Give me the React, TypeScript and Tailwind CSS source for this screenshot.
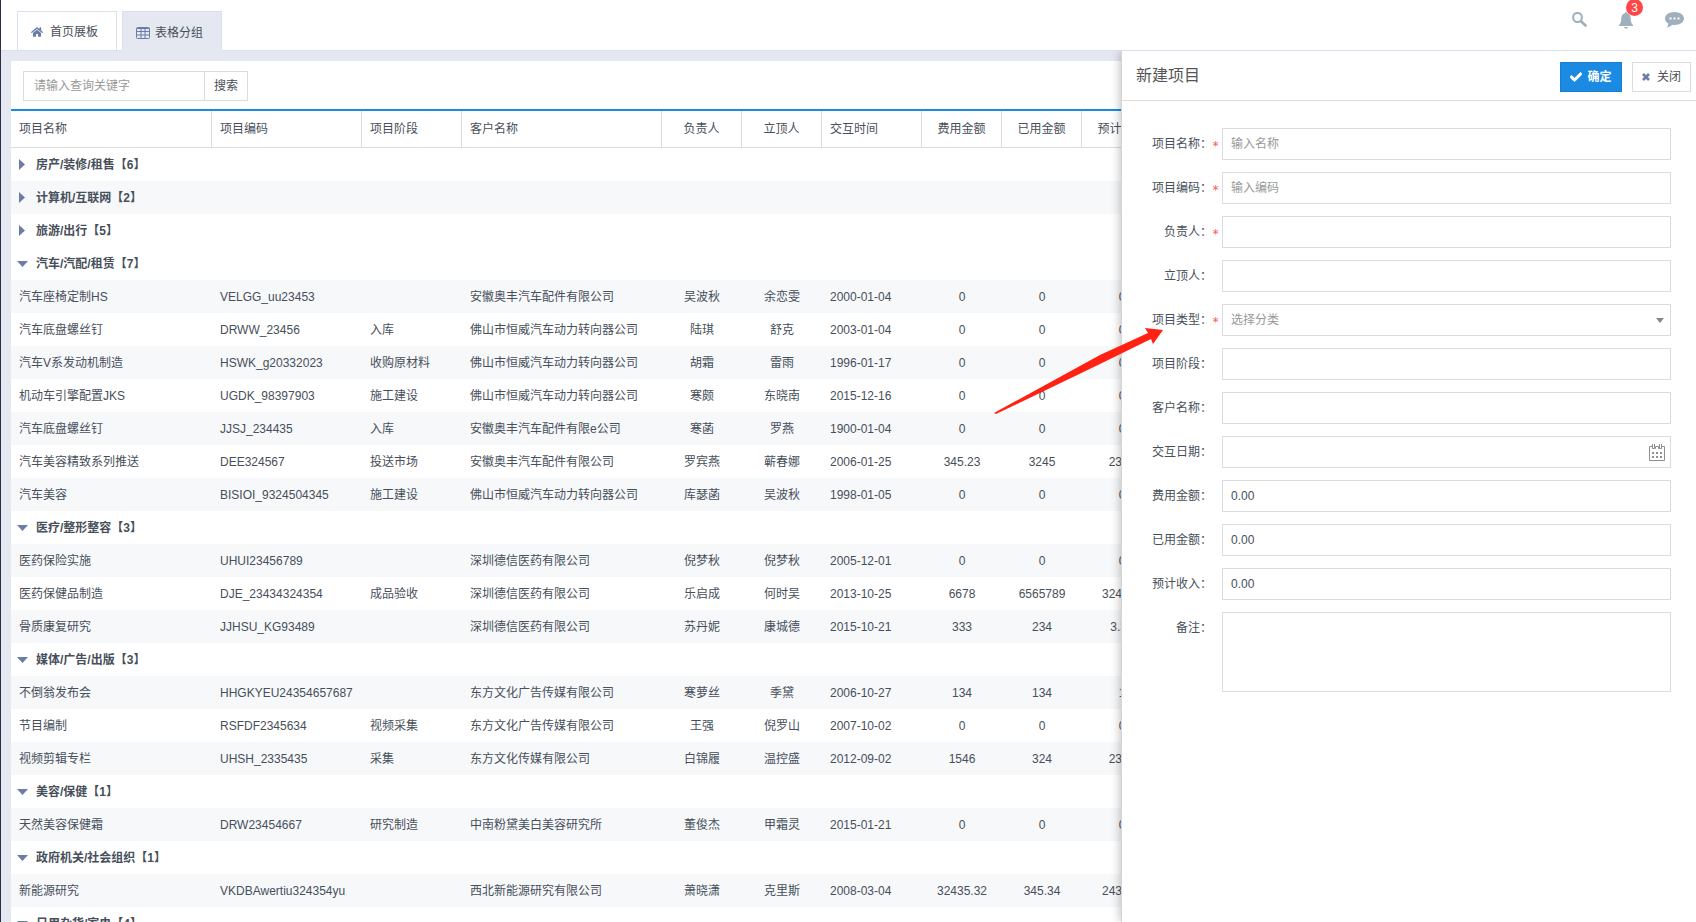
import { FaCheck, FaHome } from 'react-icons/fa';

type Align = 'left' | 'center';

const columns: { title: string; align: Align }[] = [
    { title: '项目名称', align: 'left' },
    { title: '项目编码', align: 'left' },
    { title: '项目阶段', align: 'left' },
    { title: '客户名称', align: 'left' },
    { title: '负责人', align: 'center' },
    { title: '立顶人', align: 'center' },
    { title: '交互时间', align: 'left' },
    { title: '费用金额', align: 'center' },
    { title: '已用金额', align: 'center' },
    { title: '预计收入', align: 'center' },
];

type Group = { name: string; count: number; open: boolean; rows: string[][] };

const groups: Group[] = [
    { name: '房产/装修/租售', count: 6, open: false, rows: [] },
    { name: '计算机/互联网', count: 2, open: false, rows: [] },
    { name: '旅游/出行', count: 5, open: false, rows: [] },
    {
        name: '汽车/汽配/租赁',
        count: 7,
        open: true,
        rows: [
            ['汽车座椅定制HS', 'VELGG_uu23453', '', '安徽奥丰汽车配件有限公司', '吴波秋', '余恋雯', '2000-01-04', '0', '0', '0'],
            ['汽车底盘螺丝钉', 'DRWW_23456', '入库', '佛山市恒威汽车动力转向器公司', '陆琪', '舒克', '2003-01-04', '0', '0', '0'],
            ['汽车V系发动机制造', 'HSWK_g20332023', '收购原材料', '佛山市恒威汽车动力转向器公司', '胡霜', '雷雨', '1996-01-17', '0', '0', '0'],
            ['机动车引擎配置JKS', 'UGDK_98397903', '施工建设', '佛山市恒威汽车动力转向器公司', '寒颇', '东晓南', '2015-12-16', '0', '0', '0'],
            ['汽车底盘螺丝钉', 'JJSJ_234435', '入库', '安徽奥丰汽车配件有限e公司', '寒菡', '罗燕', '1900-01-04', '0', '0', '0'],
            ['汽车美容精致系列推送', 'DEE324567', '投送市场', '安徽奥丰汽车配件有限公司', '罗宾燕', '蕲春娜', '2006-01-25', '345.23', '3245', '2345'],
            ['汽车美容', 'BISIOI_9324504345', '施工建设', '佛山市恒威汽车动力转向器公司', '库瑟菡', '吴波秋', '1998-01-05', '0', '0', '0'],
        ],
    },
    {
        name: '医疗/整形整容',
        count: 3,
        open: true,
        rows: [
            ['医药保险实施', 'UHUI23456789', '', '深圳德信医药有限公司', '倪梦秋', '倪梦秋', '2005-12-01', '0', '0', '0'],
            ['医药保健品制造', 'DJE_23434324354', '成品验收', '深圳德信医药有限公司', '乐启成', '何时吴', '2013-10-25', '6678', '6565789', '324324'],
            ['骨质康复研究', 'JJHSU_KG93489', '', '深圳德信医药有限公司', '苏丹妮', '康城德', '2015-10-21', '333', '234', '3.33'],
        ],
    },
    {
        name: '媒体/广告/出版',
        count: 3,
        open: true,
        rows: [
            ['不倒翁发布会', 'HHGKYEU24354657687', '', '东方文化广告传媒有限公司', '寒萝丝', '季黛', '2006-10-27', '134', '134', '1'],
            ['节目编制', 'RSFDF2345634', '视频采集', '东方文化广告传媒有限公司', '王强', '倪罗山', '2007-10-02', '0', '0', '0'],
            ['视频剪辑专栏', 'UHSH_2335435', '采集', '东方文化传媒有限公司', '白锦履', '温控盛', '2012-09-02', '1546', '324', '2343'],
        ],
    },
    {
        name: '美容/保健',
        count: 1,
        open: true,
        rows: [
            ['天然美容保健霜', 'DRW23454667', '研究制造', '中南粉黛美白美容研究所', '董俊杰', '甲霜灵', '2015-01-21', '0', '0', '0'],
        ],
    },
    {
        name: '政府机关/社会组织',
        count: 1,
        open: true,
        rows: [
            ['新能源研究', 'VKDBAwertiu324354yu', '', '西北新能源研究有限公司', '萧晓潇', '克里斯', '2008-03-04', '32435.32', '345.34', '243434'],
        ],
    },
    { name: '日用杂货/家电', count: 4, open: true, rows: [] },
];

// stripes count the rows of collapsed groups too
const groupStart = (index: number) =>
    groups.slice(0, index).reduce((sum, group) => sum + group.count + 1, 0);

const rowClass = (n: number) => (n % 2 === 1 ? 'h-[33px] bg-[#f6f8fa]' : 'h-[33px] bg-white');

const TableIcon = () => (
    <svg width="14" height="12" viewBox="0 0 14 12" fill="none" stroke="#6b7ca6" className="shrink-0">
        <rect x="0.5" y="0.5" width="13" height="11" rx="1" />
        <path d="M1 1.5h12M1 4.5h12M1 8h12M5 1v10M9 1v10" />
    </svg>
);

const SearchIcon = () => (
    <svg width="15" height="15" viewBox="0 0 15 15" fill="none" stroke="currentColor">
        <ellipse cx="5.500" cy="5.500" rx="4.400" ry="4.600" strokeWidth="2" />
        <path d="M9 9.300L13.500 13.500" strokeWidth="2.600" strokeLinecap="round" />
    </svg>
);

const BellIcon = () => (
    <svg width="14" height="17" viewBox="0 0 14 17" fill="currentColor">
        <path d="M7 0c.7 0 1 .5 1 1.200C10.500 1.800 11.700 3.800 11.700 6.300c0 3.200.5 5 2.300 6.700v1H0v-1c1.800-1.700 2.300-3.500 2.300-6.700C2.300 3.800 3.500 1.800 6 1.200 6 .5 6.300 0 7 0z" />
        <path d="M5.200 15h3.600c0 1-.8 1.700-1.800 1.700S5.200 16 5.200 15z" />
    </svg>
);

const CommentIcon = () => (
    <svg width="19" height="16" viewBox="0 0 19 16">
        <path fill="currentColor" d="M9.500 0C14.700 0 19 2.800 19 6.500S14.700 13 9.500 13c-.8 0-1.500 0-2.200-.2C5.800 14.200 4 15 1.800 15.200c1-1 1.500-2.200 1.500-3.600C1.300 10.400 0 8.600 0 6.500 0 2.800 4.300 0 9.500 0z" />
        <path fill="#fff" d="M4.500 5.500h2v2h-2zM8.500 5.500h2v2h-2zM12.500 5.500h2v2h-2z" />
    </svg>
);

const CheckIcon = () => <FaCheck size={12} stroke="currentColor" strokeWidth={40} />;

const CloseIcon = () => (
    <svg width="8" height="8" viewBox="0 0 8 8" stroke="#6b7ca6" strokeWidth="2.600">
        <path d="M1 1l6 6M7 1L1 7" />
    </svg>
);

const CalendarIcon = () => (
    <svg width="16" height="17" viewBox="0 0 16 17" fill="none" stroke="#8f8f8f">
        <path d="M3.500 2.500h-3v14h15v-14h-3M5.500 4.500h1v-2h3v2h1M3.500 0v4.500h2V0M10.500 0v4.500h2V0" />
        <path d="M3 9h2M7 9h2M11 9h2M3 13h2M7 13h2M11 13h2" strokeWidth="2" />
    </svg>
);

const GroupArrow = ({ open }: { open: boolean }) =>
    open ? (
        <span className="w-[25px] pl-[6px]">
            <svg width="11" height="6" viewBox="0 0 11 6" fill="#6b7ca6"><path d="M0 0h11L5.500 6z" /></svg>
        </span>
    ) : (
        <span className="w-[25px] pl-2">
            <svg width="6" height="11" viewBox="0 0 6 11" fill="#6b7ca6"><path d="M0 0v11L6 5.500z" /></svg>
        </span>
    );

const Header = () => (
    <header className="flex h-[51px] shrink-0 items-end justify-between border-b border-[#d8e2ee] bg-white pl-4">
        <nav className="-mb-px flex gap-[5px]">
            <a href="#home" className="flex h-10 w-[100px] items-center gap-[7px] border border-[#d8e2ee] pt-0.5 pl-[13px]">
                <FaHome className="text-[#6b7ca6]" size={12} />
                首页展板
            </a>
            <a href="#group" className="flex h-10 w-[100px] items-center gap-[5px] border border-b-0 border-[#d8e2ee] bg-[#e5e8f1] pt-0.5 pl-[13px]">
                <TableIcon />
                表格分组
            </a>
        </nav>
        <div className="flex h-full items-start gap-8 pt-3 pr-3 text-[#9eafbe]">
            <button type="button" aria-label="搜索"><SearchIcon /></button>
            <button type="button" aria-label="通知" className="relative">
                <BellIcon />
                <span className="absolute -top-[13px] left-[7px] flex size-[17px] items-center justify-center rounded-full bg-[#ff4545] text-xs text-white">3</span>
            </button>
            <button type="button" aria-label="消息"><CommentIcon /></button>
        </div>
    </header>
);

const GroupRows = ({ group, start }: { group: Group; start: number }) => (
    <>
        <tr className={rowClass(start)}>
            <th colSpan={columns.length} className="p-0 text-left">
                <button type="button" className="flex items-center font-bold" aria-expanded={group.open}>
                    <GroupArrow open={group.open} />
                    {group.name}【{group.count}】
                </button>
            </th>
        </tr>
        {group.rows.map((row, n) => (
            <tr key={row[1]} className={rowClass(start + n + 1)}>
                {row.map((cell, i) => (
                    <td key={i} className={columns[i].align === 'center' ? 'p-0 text-center' : 'px-2 py-0'}>{cell}</td>
                ))}
            </tr>
        ))}
    </>
);

const ProjectTable = () => (
    <table className="w-[1151px] table-fixed border-separate border-spacing-0 whitespace-nowrap">
        <colgroup>
            <col className="w-[201px]" />
            <col className="w-[150px]" />
            <col className="w-[100px]" />
            <col className="w-[200px]" />
            <col className="w-20" />
            <col className="w-20" />
            <col className="w-[100px]" />
            <col className="w-20" />
            <col className="w-20" />
            <col className="w-20" />
        </colgroup>
        <thead>
            <tr className="h-[37px]">
                {columns.map(({ title, align }) => (
                    <th
                        key={title}
                        className={`border-r border-b border-[#dcdcdc] py-0 font-normal ${align === 'center' ? 'px-0 text-center' : 'px-2 text-left'}`}
                    >
                        {title}
                    </th>
                ))}
            </tr>
        </thead>
        <tbody>
            {groups.map((group, i) => <GroupRows key={group.name} group={group} start={groupStart(i)} />)}
        </tbody>
    </table>
);

type FieldProps = {
    id: string;
    label: string;
    required?: boolean;
    placeholder?: string;
    value?: string;
    kind?: 'text' | 'select' | 'date' | 'area';
};

const fields: FieldProps[] = [
    { id: 'name', label: '项目名称', required: true, placeholder: '输入名称' },
    { id: 'code', label: '项目编码', required: true, placeholder: '输入编码' },
    { id: 'owner', label: '负责人', required: true },
    { id: 'founder', label: '立顶人' },
    { id: 'type', label: '项目类型', required: true, placeholder: '选择分类', kind: 'select' },
    { id: 'stage', label: '项目阶段' },
    { id: 'customer', label: '客户名称' },
    { id: 'date', label: '交互日期', kind: 'date' },
    { id: 'cost', label: '费用金额', value: '0.00' },
    { id: 'used', label: '已用金额', value: '0.00' },
    { id: 'income', label: '预计收入', value: '0.00' },
    { id: 'remark', label: '备注', kind: 'area' },
];

const control = 'block w-full border border-[#dcdcdc] bg-white px-2 outline-none placeholder:text-[#999]';

const Field = ({ id, label, required, placeholder, value, kind = 'text' }: FieldProps) => (
    <div className="flex items-start">
        <label htmlFor={id} className="flex h-8 w-[90px] shrink-0 items-center justify-end">
            {label}：
            <span className="w-[10px] pt-1 font-['DejaVu_Sans_Mono',monospace] text-[#f55]">{required && '*'}</span>
        </label>
        <div className="relative flex-1">
            {kind === 'area' && <textarea id={id} className={`${control} h-20 resize-none`} />}
            {kind === 'select' && (
                <>
                    <select id={id} className={`${control} h-8 appearance-none text-[#999]`}>
                        <option>{placeholder}</option>
                    </select>
                    <svg className="pointer-events-none absolute top-[14px] right-[7px]" width="8" height="5" viewBox="0 0 8 5" fill="#888"><path d="M0 0h8L4 5z" /></svg>
                </>
            )}
            {(kind === 'text' || kind === 'date') && (
                <input id={id} type="text" className={`${control} h-8`} placeholder={placeholder} defaultValue={value} />
            )}
            {kind === 'date' && (
                <span className="pointer-events-none absolute top-2 right-[6px]"><CalendarIcon /></span>
            )}
        </div>
    </div>
);

const Drawer = () => (
    <aside className="absolute inset-y-0 right-0 w-[575px] border-l border-[#d5d5d5] bg-white shadow-[0_0_10px_rgba(0,0,0,0.3)]">
        <div className="flex h-[50px] items-center justify-between border-b border-[#dcdcdc] pr-[5px] pl-[14px]">
            <h2 className="text-base text-[#555]">新建项目</h2>
            <div className="flex gap-[10px] pt-[3px]">
                <button type="submit" form="project" className="flex h-[30px] w-[62px] items-center justify-center gap-[5px] border border-[#147fd0] bg-[#1a8ae2] font-bold text-white">
                    <CheckIcon />
                    确定
                </button>
                <button type="button" className="flex h-[30px] w-[59px] items-center justify-center gap-[7px] border border-[#dcdcdc] bg-white">
                    <CloseIcon />
                    关闭
                </button>
            </div>
        </div>
        <form id="project" className="flex flex-col gap-3 pt-[27px] pr-[25px] pl-[10px]">
            {fields.map((field) => <Field key={field.id} {...field} />)}
        </form>
    </aside>
);

// callout pointing at the category field
const Arrow = () => (
    <svg className="pointer-events-none absolute top-[277px] right-[532px]" width="170" height="86" viewBox="0 0 170 86" fill="#ff2112">
        <path d="M0 85L106 27L154 5L151 0L169 2L159 16L157 11L106 36L2 86z" />
    </svg>
);

export default function App() {
    return (
        <div className="flex h-screen flex-col overflow-hidden border-l border-[#2c2f4a] font-['Liberation_Sans','Noto_Sans_CJK_SC',sans-serif] text-xs text-[#474f5a]">
            <Header />
            <main className="relative min-h-0 flex-1 overflow-hidden bg-[#e5e8f1] pt-[10px] pl-[10px]">
                <section className="h-full overflow-hidden bg-white">
                    <form className="flex border-b-2 border-[#1a8ae2] px-3 pt-[10px] pb-2">
                        <input type="text" aria-label="查询关键字" placeholder="请输入查询关键字" className="h-[30px] w-[182px] border border-[#dcdcdc] px-[10px] outline-none placeholder:text-[#999]" />
                        <button type="button" className="-ml-px h-[30px] w-11 border border-[#dcdcdc]">搜索</button>
                    </form>
                    <ProjectTable />
                </section>
                <Drawer />
                <Arrow />
            </main>
        </div>
    );
}
